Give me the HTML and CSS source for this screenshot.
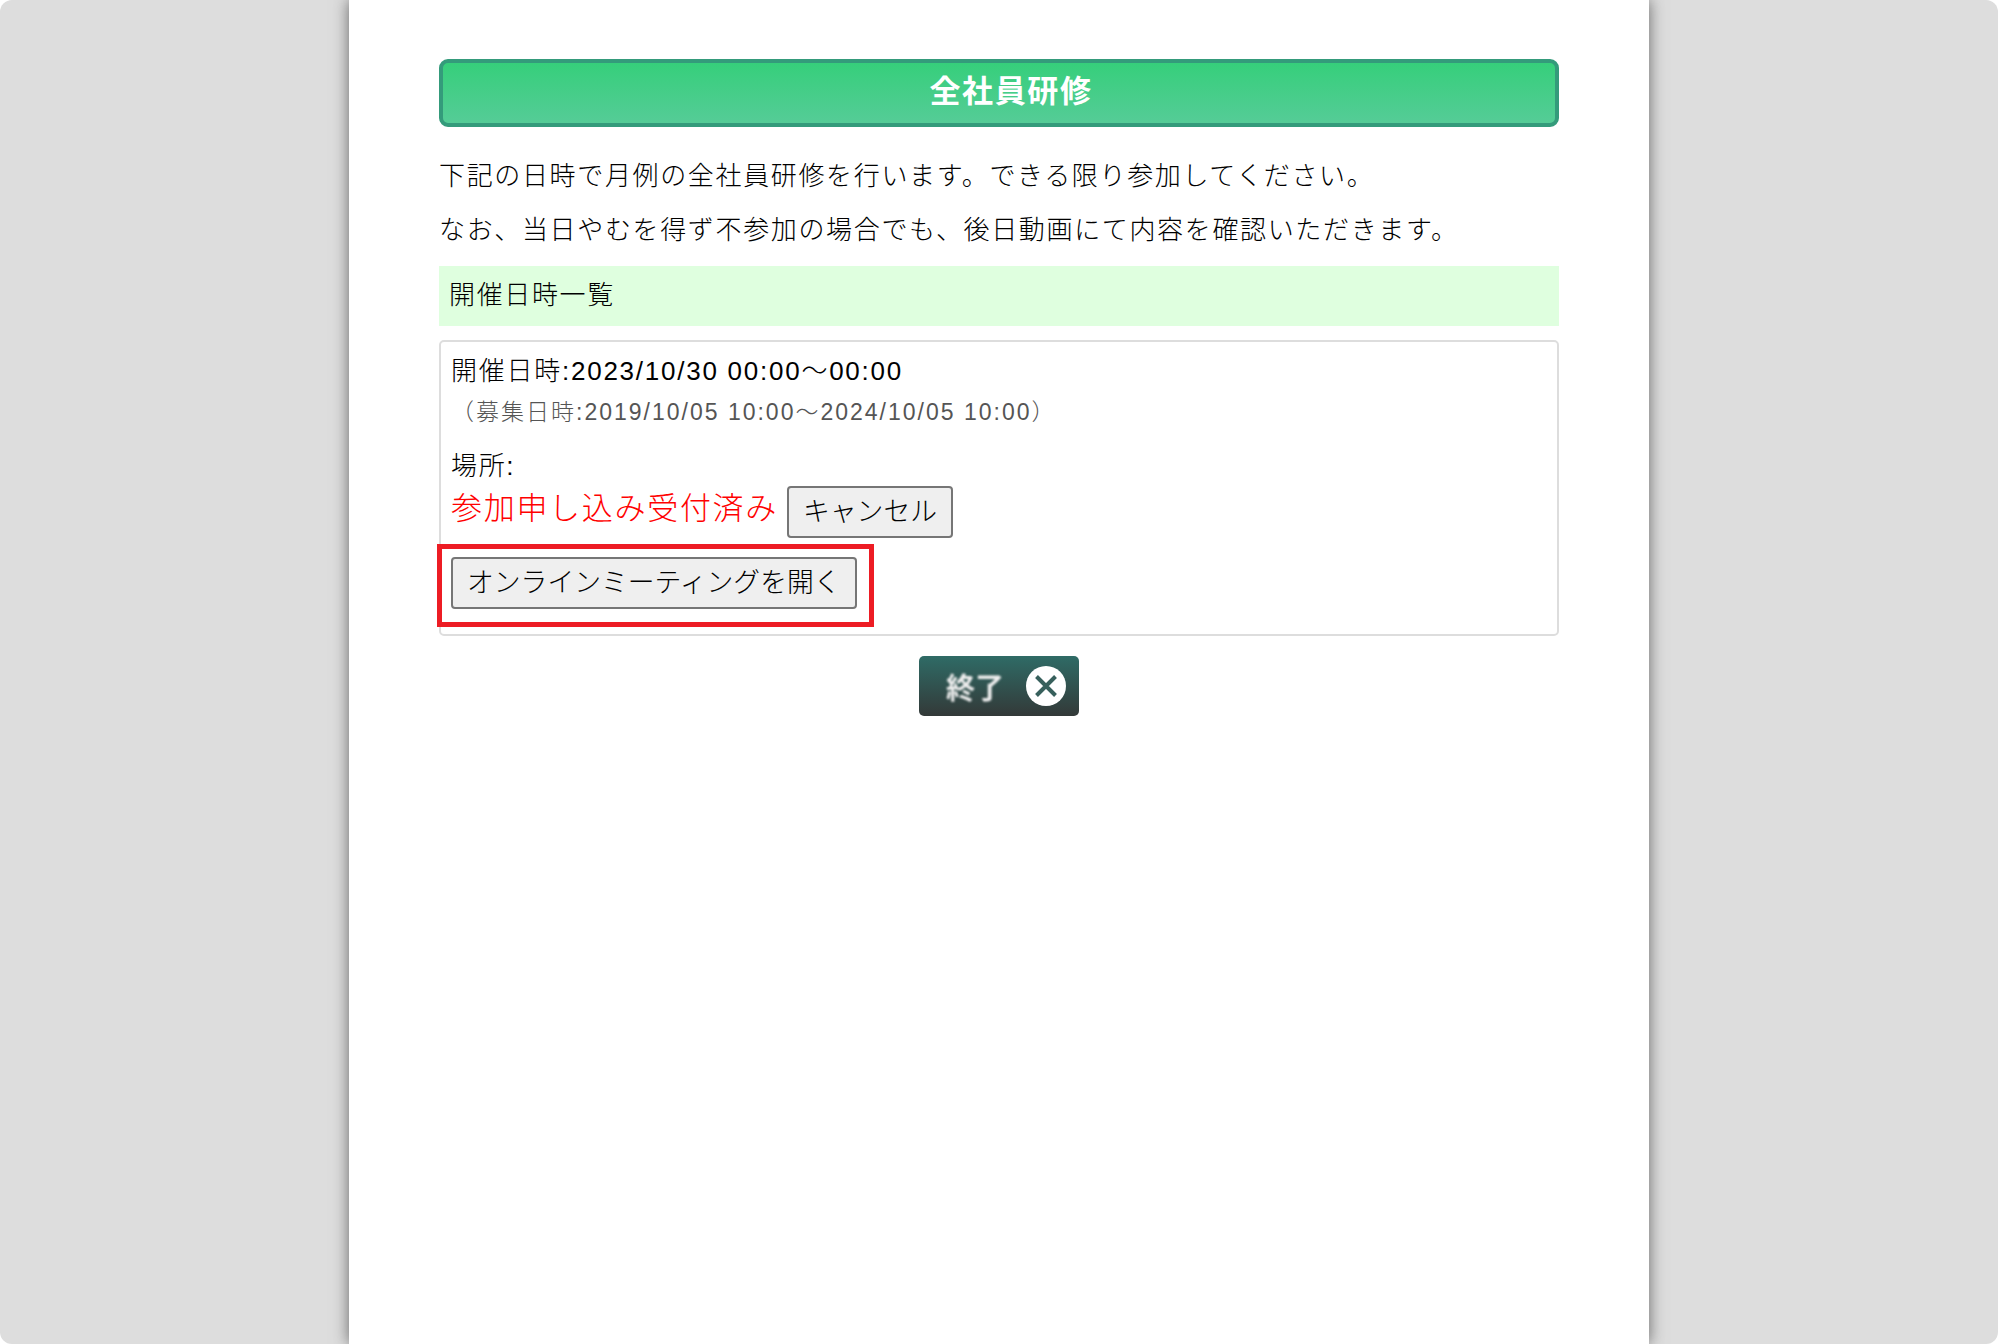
FILE: index.html
```html
<!DOCTYPE html>
<html lang="ja">
<head>
  <meta charset="UTF-8" />
  <title>全社員研修</title>
  <link rel="stylesheet" href="styles.css">
</head>
<body>

<div class="page">
  <h1 class="title">全社員研修</h1>

  <p class="lead">下記の日時で月例の全社員研修を行います。できる限り参加してください。</p>
  <p class="lead">なお、当日やむを得ず不参加の場合でも、後日動画にて内容を確認いただきます。</p>

  <h2 class="band">開催日時一覧</h2>

  <div class="event">
    <div class="event-date">開催日時:2023/10/30 00:00～00:00</div>
    <div class="event-recruit">（募集日時:2019/10/05 10:00～2024/10/05 10:00）</div>
    <div class="event-place">場所:</div>
    <div class="event-status">
      <span class="accepted">参加申し込み受付済み</span>
      <button class="btn" type="button">キャンセル</button>
    </div>
    <div class="event-online">
      <button class="btn" type="button">オンラインミーティングを開く</button>
      <div class="callout"></div>
    </div>
  </div>

  <div class="exit-row">
    <a class="exit" href="#">
      <span class="exit-label">終了</span>
      <svg class="exit-icon" viewBox="0 0 40 40" width="40" height="40">
        <circle cx="20" cy="20" r="20" fill="#fff"/>
        <path d="M10.5 10.5 L29.5 29.5 M29.5 10.5 L10.5 29.5" stroke="#37605c" stroke-width="4" fill="none"/>
      </svg>
    </a>
  </div>
</div>

</body>
</html>
```

FILE: styles.css
```css
* { box-sizing: border-box; }

html {
  height: 100%;
  background: #fff;
}

body {
  height: 100%;
  margin: 0;
  border-radius: 12px;
  background-color: #ddd;
  color: #000;
  font-family: "Liberation Sans", "Noto Sans CJK JP", sans-serif;
  font-size: 26px;
  font-weight: 300;
  letter-spacing: 1.65px;
  overflow: hidden;
}

.page {
  width: 1300px;
  height: 1344px;
  margin: 0 auto;
  padding: 59px 90px 0;
  background: #fff;
  box-shadow: 0 0 15px #666;
}

.title {
  height: 68px;
  margin: 0;
  border: 4px solid #349b7b;
  border-radius: 9px;
  background: linear-gradient(#36cf7b, #55cc97);
  color: #fff;
  font-size: 31px;
  font-weight: bold;
  line-height: 58px;
  text-align: center;
  padding-left: 24px;
}

.lead {
  margin: 0;
  height: 54px;
  line-height: 54px;
}

.lead:first-of-type { margin-top: 22px; }

.band {
  height: 60px;
  margin: 9px 0 14px;
  padding-left: 10px;
  background: #dfffdf;
  font-size: 26px;
  font-weight: 300;
  line-height: 58px;
}

.event {
  height: 296px;
  padding: 10px 10px 0;
  border: 2px solid #ddd;
  border-radius: 5px;
}

.event-date {
  letter-spacing: 1.75px;
  line-height: 39px;
}

.event-recruit {
  margin-top: 3px;
  color: #555;
  font-size: 23px;
  letter-spacing: 2px;
  line-height: 36px;
}

.event-place {
  margin-top: 16px;
  line-height: 40px;
}

.event-status {
  display: flex;
  align-items: center;
  gap: 9px;
  height: 52px;
}

.accepted {
  margin-bottom: 13px;
  color: #f00;
  font-size: 31px;
  letter-spacing: 1.7px;
}

.btn {
  height: 52px;
  padding: 0 14px 6px;
  border: 2px solid #767676;
  border-radius: 4px;
  background: #efefef;
  color: #000;
  font-family: inherit;
  font-size: 26.8px;
  font-weight: 300;
  letter-spacing: 0;
}

.event-online {
  position: relative;
  margin-top: 19px;
}

.callout {
  position: absolute;
  left: -14px;
  top: -13px;
  width: 437px;
  height: 83px;
  border: 5px solid #ed1c24;
}

.exit-row {
  display: flex;
  justify-content: center;
  margin-top: 20px;
}

.exit {
  display: flex;
  align-items: center;
  justify-content: space-between;
  width: 160px;
  height: 60px;
  padding: 0 13px 0 27px;
  border-radius: 5px;
  background: linear-gradient(#2f6b66, #333938);
  color: #eee;
  font-size: 29px;
  font-weight: bold;
  letter-spacing: 0;
  text-decoration: none;
}

.exit-label { filter: blur(0.9px); }

.exit-icon {
  display: block;
  flex: none;
}
```
